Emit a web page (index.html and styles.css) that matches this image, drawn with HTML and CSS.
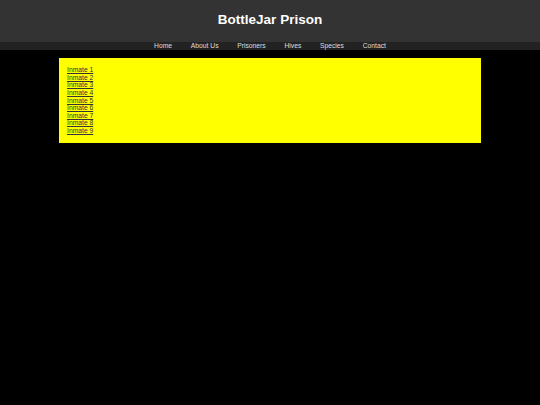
FILE: index.html
```html
<!DOCTYPE html>
<html>
<head>
<meta charset="utf-8">
<title>BottleJar Prison</title>
<link rel="stylesheet" href="styles.css">
</head>
<body>
<header class="site-header">
  <h1 class="site-title">BottleJar Prison</h1>
</header>
<nav class="site-nav">
  <a href="#">Home</a>
  <a href="#">About Us</a>
  <a href="#">Prisoners</a>
  <a href="#">Hives</a>
  <a href="#">Species</a>
  <a href="#">Contact</a>
</nav>
<main class="content">
  <ul class="inmates">
    <li><a href="#">Inmate 1</a></li>
    <li><a href="#">Inmate 2</a></li>
    <li><a href="#">Inmate 3</a></li>
    <li><a href="#">Inmate 4</a></li>
    <li><a href="#">Inmate 5</a></li>
    <li><a href="#">Inmate 6</a></li>
    <li><a href="#">Inmate 7</a></li>
    <li><a href="#">Inmate 8</a></li>
    <li><a href="#">Inmate 9</a></li>
  </ul>
</main>
</body>
</html>
```

FILE: styles.css
```css
html, body {
  margin: 0;
  padding: 0;
  background: #000;
  font-family: "Liberation Sans", Arial, sans-serif;
}

.site-header {
  background: #333;
  height: 42px;
  box-sizing: border-box;
  padding-top: 12px;
  text-align: center;
}

.site-title {
  margin: 0;
  color: #fff;
  font-size: 13.5px;
  font-weight: bold;
  line-height: 15.5px;
}

.site-nav {
  background: #222;
  height: 8px;
  display: flex;
  justify-content: center;
  gap: 18.7px;
  font-size: 6.75px;
  line-height: 8px;
}

.site-nav a {
  color: #ddd;
  text-decoration: none;
}

.content {
  width: 422px;
  box-sizing: border-box;
  margin: 8px auto 0;
  padding: 8px;
  background: #ff0;
}

.inmates {
  list-style: none;
  margin: 0;
  padding: 0;
  font-size: 6.75px;
  line-height: 7.625px;
}

.inmates a {
  color: #333;
  text-decoration: underline;
}
```
